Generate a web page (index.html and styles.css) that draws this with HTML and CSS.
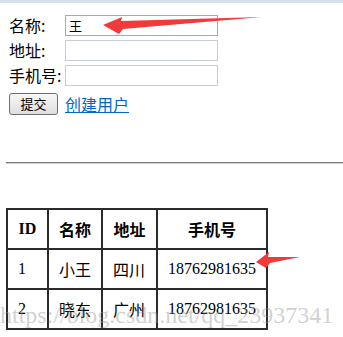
FILE: index.html
```html
<!DOCTYPE html>
<html lang="zh">
<head>
    <meta charset="UTF-8">
    <title>用户列表</title>
    <link rel="stylesheet" href="styles.css">
</head>
<body>
    <div class="topbar"></div>

    <!-- Add User Form -->
    <div class="page">
        <form class="user-form">
            <label>名称:</label>
            <input type="text" class="focused" value="王">
            <label>地址:</label>
            <input type="text">
            <label>手机号:</label>
            <input type="text">
            <button type="button">提交</button>
            <a href="#">创建用户</a>
        </form>

        <hr>

        <!-- User List -->
        <table class="users">
            <tr>
                <th class="c-id">ID</th>
                <th class="c-name">名称</th>
                <th class="c-addr">地址</th>
                <th class="c-phone">手机号</th>
            </tr>
            <tr>
                <td>1</td>
                <td>小王</td>
                <td>四川</td>
                <td>18762981635</td>
            </tr>
            <tr>
                <td>2</td>
                <td>晓东</td>
                <td>广州</td>
                <td>18762981635</td>
            </tr>
        </table>
    </div>

    <!-- annotations -->
    <svg class="marks" width="343" height="337" viewBox="0 0 343 337">
        <polygon points="103,25 122,17 121,21 262,17 123,29 119,34" fill="#f23a3a"/>
        <polygon points="256,262 269,252 268,257 300,257 270,263 266,268" fill="#f23a3a"/>
    </svg>
    <div class="watermark">https://blog.csdn.net/qq_23937341</div>
</body>
</html>
```

FILE: styles.css
```css
body { margin: 0; font-family: "Liberation Serif", "Noto Sans CJK SC", serif; font-size: 16px; color: #000; background: #fff; position: relative; width: 343px; height: 337px; overflow: hidden; }
.topbar { height: 3px; background: #d5e0ec; }
.page { padding: 12px 0 0 6px; }

/* form */
.user-form { display: grid; grid-template-columns: 56px 153px; grid-template-rows: 21px 21px 21px 22px; row-gap: 4px; align-items: center; padding-left: 3px; }
.user-form label { font-family: "Noto Sans CJK SC", sans-serif; font-size: 16px; line-height: 21px; }
.user-form input { box-sizing: border-box; width: 153px; height: 21px; margin: 0; padding: 0 3px; border: 1px solid #c7ced6; font-family: "Noto Sans CJK SC", sans-serif; font-size: 13px; }
.user-form input.focused { border-color: #8fb0cc; }
.user-form button { box-sizing: border-box; width: 49px; height: 22px; margin-top: 5px; padding: 0; border: 1px solid #707070; border-radius: 3px; background: linear-gradient(#f7f7f7, #dedede); font-family: "Noto Sans CJK SC", sans-serif; font-size: 13px; }
.user-form a { margin-top: 5px; color: #0066cc; font-family: "Noto Sans CJK SC", sans-serif; font-size: 16px; line-height: 20px; }

hr { margin: 50px 0 0 0; height: 0; border: none; border-top: 1px solid #7c7c7c; border-bottom: 1px solid #cfcfcf; }

/* table */
.users { margin-top: 44px; border-collapse: collapse; border: 2px solid #2b2b2b; }
.users th, .users td { height: 38px; padding: 0 10px; border: 2px solid #2b2b2b; }
.users th { font-weight: bold; text-align: center; }
.users td { text-align: left; }
.c-id { width: 19px; }
.c-name { width: 32px; }
.c-addr { width: 33px; }
.c-phone { width: 88px; }

.marks { position: absolute; left: 0; top: 0; pointer-events: none; }
.watermark { position: absolute; left: 0; top: 302px; font-family: "Liberation Serif", serif; font-size: 24px; color: rgba(150, 150, 150, 0.45); white-space: nowrap; pointer-events: none; }
```
